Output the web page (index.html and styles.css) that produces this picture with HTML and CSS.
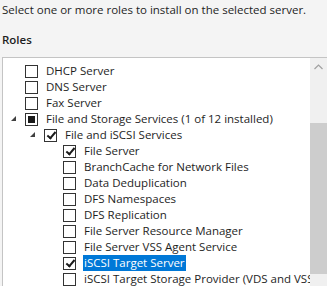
FILE: index.html
```html
<!DOCTYPE html>
<html>
<head>
<meta charset="utf-8">
<link rel="stylesheet" href="styles.css">
</head>
<body>
<div class="page">
  <p class="intro">Select one or more roles to install on the selected server.</p>
  <h2 class="heading">Roles</h2>
  <div class="listbox">
    <ul class="tree">
      <li class="row l1"><span class="exp"></span><span class="cb"></span><span class="lbl">DHCP Server</span></li>
      <li class="row l1"><span class="exp"></span><span class="cb"></span><span class="lbl">DNS Server</span></li>
      <li class="row l1"><span class="exp"></span><span class="cb"></span><span class="lbl">Fax Server</span></li>
      <li class="row l1"><span class="exp open"></span><span class="cb partial"></span><span class="lbl">File and Storage Services (1 of 12 installed)</span></li>
      <li class="row l2"><span class="exp open"></span><span class="cb checked"></span><span class="lbl">File and iSCSI Services</span></li>
      <li class="row l3"><span class="cb checked"></span><span class="lbl">File Server</span></li>
      <li class="row l3"><span class="cb"></span><span class="lbl">BranchCache for Network Files</span></li>
      <li class="row l3"><span class="cb"></span><span class="lbl">Data Deduplication</span></li>
      <li class="row l3"><span class="cb"></span><span class="lbl">DFS Namespaces</span></li>
      <li class="row l3"><span class="cb"></span><span class="lbl">DFS Replication</span></li>
      <li class="row l3"><span class="cb"></span><span class="lbl">File Server Resource Manager</span></li>
      <li class="row l3"><span class="cb"></span><span class="lbl">File Server VSS Agent Service</span></li>
      <li class="row l3"><span class="cb checked"></span><span class="lbl sel">iSCSI Target Server</span></li>
      <li class="row l3"><span class="cb"></span><span class="lbl">iSCSI Target Storage Provider (VDS and VSS hardware providers)</span></li>
    </ul>
    <div class="scrollbar">
      <div class="arrow"><svg width="9" height="6" viewBox="0 0 9 6"><path d="M0.5 5 L4.5 1 L8.5 5" fill="none" stroke="#a0a0a0" stroke-width="1.2"/></svg></div>
      <div class="track"><div class="thumb"></div></div>
    </div>
  </div>
</div>
</body>
</html>
```

FILE: styles.css
```css
html, body {
  margin: 0;
  padding: 0;
  background: #f4f4f4;
  overflow: hidden;
}
.page {
  font-family: "Open Sans", "Noto Sans", sans-serif;
  font-size: 11.5px;
  color: #1e1e1e;
  width: 327px;
  height: 286px;
  overflow: hidden;
}
.intro {
  margin: 0;
  padding: 2px 0 0 2px;
  line-height: 16px;
  white-space: nowrap;
}
.heading {
  margin: 0;
  padding: 14px 0 0 2px;
  font-size: 11.5px;
  font-weight: 600;
  line-height: 16px;
}
.listbox {
  margin: 9px 0 0 2px;
  width: 360px;
  height: 260px;
  background: #fff;
  border: 1px solid #c4c4c4;
  display: flex;
}
.tree {
  list-style: none;
  margin: 0;
  padding: 5px 0 0 0;
  width: 307px;
  overflow: hidden;
}
.row {
  height: 16px;
  display: flex;
  align-items: center;
  white-space: nowrap;
}
.l1 { padding-left: 7px; }
.l2 { padding-left: 26px; }
.l3 { padding-left: 60px; }
.exp {
  width: 8px;
  height: 16px;
  margin-right: 7px;
  position: relative;
}
.exp.open::after {
  content: "";
  position: absolute;
  left: 1px;
  top: 5px;
  width: 0;
  height: 0;
  border-left: 5px solid transparent;
  border-bottom: 5px solid #404040;
}
.cb {
  box-sizing: border-box;
  width: 13px;
  height: 13px;
  border: 1px solid #333;
  background: #fff;
  flex: none;
  position: relative;
}
.l1 .cb, .l3 .cb:not(.checked) { border-color: #333; }
.cb.partial::after {
  content: "";
  position: absolute;
  left: 2px;
  top: 2px;
  width: 7px;
  height: 7px;
  background: #1a1a1a;
}
.cb.checked::after {
  content: "";
  position: absolute;
  left: 4px;
  top: 0px;
  width: 3px;
  height: 7px;
  border-right: 2px solid #1a1a1a;
  border-bottom: 2px solid #1a1a1a;
  transform: rotate(40deg);
}
.lbl {
  margin-left: 7px;
  line-height: 16px;
  padding: 0 1px;
}
.lbl.sel {
  background: #0078d7;
  color: #fff;
}
.scrollbar {
  width: 17px;
  flex: none;
  background: #f0f0f0;
  display: flex;
  flex-direction: column;
}
.arrow {
  height: 17px;
  display: flex;
  align-items: center;
  justify-content: center;
}
.track {
  flex: 1;
  padding-top: 48px;
}
.thumb {
  height: 151px;
  margin: 0 0 0 0;
  background: #cdcdcd;
}
```
